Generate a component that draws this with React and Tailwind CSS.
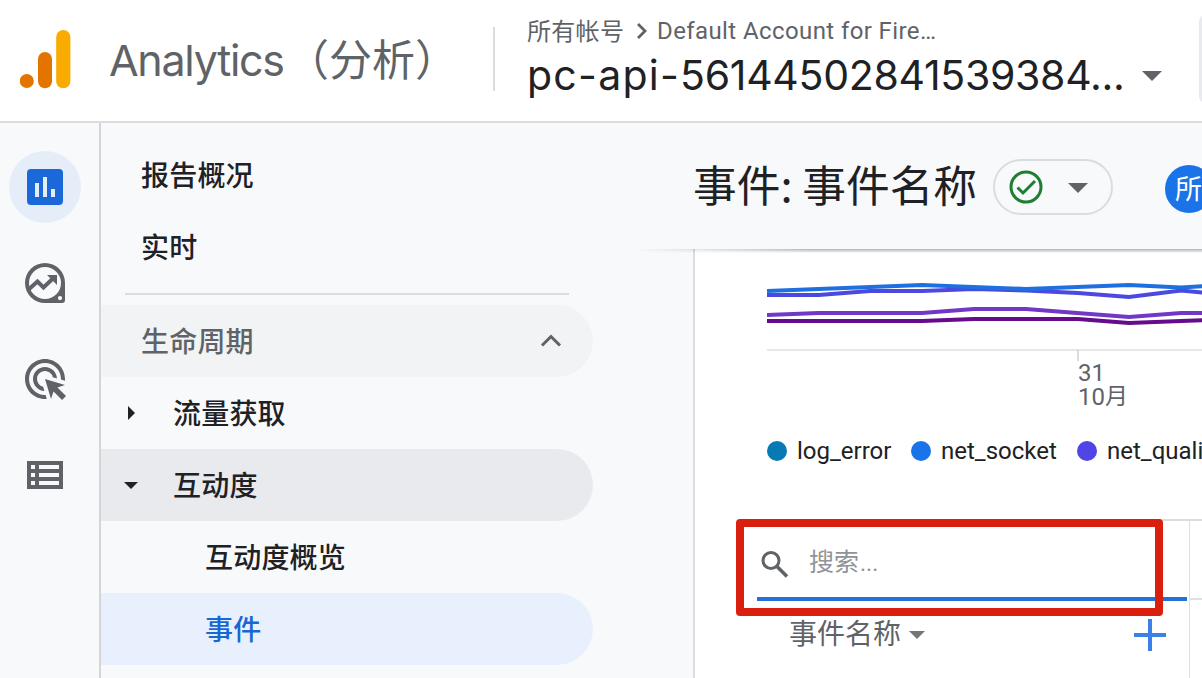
import React from 'react';

function Caret({ className }) {
  return (
    <svg viewBox="0 0 20 10" className={className} fill="currentColor">
      <path d="M0 0h20L10 10z" />
    </svg>
  );
}

function Header() {
  return (
    <header className="flex h-[123px] shrink-0 border-b-2 border-[#dadce0] bg-white">
      <div className="flex w-[495px] shrink-0 pl-5">
        <svg className="mt-[29px] h-[60px] w-[51px] shrink-0" viewBox="0 0 51 60">
          <circle cx="6.8" cy="52" r="7" fill="#e37400" />
          <rect x="18" y="23" width="14" height="36.2" rx="7" fill="#e37400" />
          <rect x="36.2" y="1" width="14.2" height="58.2" rx="7" fill="#f9ab00" />
        </svg>
        <div className="mt-[27px] ml-[38px] flex w-[384px] shrink-0 whitespace-nowrap leading-[60px] text-[#5f6368]">
          <span className="mt-[3px] w-[177px] shrink-0 font-['Inter',sans-serif] text-[43px] tracking-[-1.300px]">Analytics</span>
          <span className="font-['Noto_Sans_CJK_SC',sans-serif] text-[43px]">（分析）</span>
        </div>
        <div className="mt-[27px] h-16 w-[2px] shrink-0 bg-[#dadce0]" />
      </div>
      <div className="flex w-[704px] shrink-0 flex-col pl-8">
        <div className="mt-[15px] flex h-8 items-center whitespace-nowrap text-[24px] leading-8 text-[#5f6368]">
          <span className="-mt-[2px] w-[97px] font-['Noto_Sans_CJK_SC',sans-serif] tracking-[0.3px]">所有帐号</span>
          <svg className="mr-[7px] ml-2 h-6 w-[18px]" viewBox="0 0 18 24" fill="none" stroke="currentColor" strokeWidth="2.8">
            <path d="M6 5l7 7-7 7" />
          </svg>
          <span className="font-['Roboto',sans-serif] tracking-[0.4px]">Default Account for Fire…</span>
        </div>
        <div className="flex h-[56px] items-center">
          <span className="-mt-px w-[615px] whitespace-nowrap font-['Inter',sans-serif] text-[41px] leading-[56px] tracking-[-0.300px] text-[#202124]">
            <span className="tracking-[1.250px]">pc-api-</span>56144502841539384...
          </span>
          <Caret className="mt-[2px] h-[10px] w-5 text-[#5f6368]" />
        </div>
      </div>
      <div className="mt-[14px] h-[90px] w-10 shrink-0 rounded-lg bg-[#e8eaed]" />
    </header>
  );
}

function Rail() {
  return (
    <nav className="flex w-[101px] shrink-0 flex-col gap-6 border-r-2 border-[#d3d5d9] pt-7 pl-[9px] text-[#5f6368]">
      <div className="flex size-[72px] items-center justify-center rounded-full bg-[#e5edf9]">
        <svg className="size-12 text-[#1b69d8]" viewBox="0 0 24 24" fill="currentColor">
          <path d="M19 3H5a2 2 0 0 0-2 2v14a2 2 0 0 0 2 2h14a2 2 0 0 0 2-2V5a2 2 0 0 0-2-2zM9 17H7v-7h2zm4 0h-2V7h2zm4 0h-2v-4h2z" />
        </svg>
      </div>
      <div className="flex size-[72px] items-center justify-center">
        <svg className="size-12" viewBox="0 0 48 48">
          <path
            fill="currentColor"
            fillRule="evenodd"
            d="M24 4a20 20 0 1 0 0 40h17a3 3 0 0 0 3-3V24A20 20 0 0 0 24 4zm0 4a16 16 0 1 1 0 32 16 16 0 0 1 0-32zm15 29a2.1 2.1 0 1 1 0 4.200 2.100 2.100 0 0 1 0-4.200z"
          />
          <path d="M7 31l9.500-8.500 6 6L33 18.500" fill="none" stroke="currentColor" strokeWidth="4" />
          <path d="M26 16h10v10z" fill="currentColor" />
        </svg>
      </div>
      <div className="flex size-[72px] items-center justify-center">
        <svg className="size-12" viewBox="0 0 24 24" fill="currentColor">
          <path d="M11.710 17.990A5.993 5.993 0 0 1 6 12c0-3.310 2.690-6 6-6 3.220 0 5.840 2.530 5.990 5.710l-2.100-.63a3.999 3.999 0 1 0-4.810 4.810l.63 2.100zM22 12c0 .3-.01.6-.04.9l-1.970-.59c.01-.1.01-.21.01-.31 0-4.420-3.580-8-8-8s-8 3.580-8 8 3.580 8 8 8c.1 0 .21 0 .31-.01l.59 1.970c-.3.03-.6.04-.9.04-5.520 0-10-4.480-10-10S6.480 2 12 2s10 4.480 10 10zm-3.770 4.260L22 15l-10-3 3 10 1.260-3.770 4.270 4.270 1.980-1.980-4.280-4.260z" />
        </svg>
      </div>
      <div className="flex size-[72px] items-center justify-center">
        <svg className="size-12" viewBox="0 0 24 24" fill="currentColor">
          <path d="M3 5v14h18V5H3zm4 2v2H5V7h2zm-2 6v-2h2v2H5zm0 2h2v2H5v-2zm14 2H9v-2h10v2zm0-4H9v-2h10v2zm0-4H9V7h10v2z" />
        </svg>
      </div>
    </nav>
  );
}

function Sidebar() {
  return (
    <aside className="flex w-[592px] shrink-0 flex-col pt-4 font-['Noto_Sans_CJK_SC',sans-serif] text-[28px] leading-[70px] font-medium tracking-[0.2px] text-[#202124]">
      <div className="h-[72px] pl-10">报告概况</div>
      <div className="h-[72px] pl-10">实时</div>
      <div className="mt-[10px] mb-[10px] ml-6 h-[2px] w-[444px] bg-[#dadce0]" />
      <div className="flex h-[72px] w-[492px] items-center justify-between rounded-r-full bg-[#f1f3f4] pr-[30px] pl-10 text-[#5f6368]">
        <span className="-mt-[2px]">生命周期</span>
        <svg className="h-6 w-6" viewBox="0 0 24 24" fill="none" stroke="currentColor" strokeWidth="3">
          <path d="M3 16.500l9-9 9 9" />
        </svg>
      </div>
      <div className="flex h-[72px] w-[492px] items-center pl-[27px]">
        <svg className="h-[14px] w-[7px]" viewBox="0 0 7 14" fill="currentColor">
          <path d="M0 0l7 7-7 7z" />
        </svg>
        <span className="-mt-[2px] ml-[38px]">流量获取</span>
      </div>
      <div className="flex h-[72px] w-[492px] items-center rounded-r-full bg-[#e8eaed] pl-[23px]">
        <Caret className="h-[7px] w-[14px]" />
        <span className="-mt-[2px] ml-[35px]">互动度</span>
      </div>
      <div className="h-[72px] pl-[104px]">互动度概览</div>
      <div className="h-[72px] w-[492px] rounded-r-full bg-[#e8f0fe] pl-[104px] text-[#1967d2]">事件</div>
    </aside>
  );
}

function ReportHeader() {
  return (
    <div className="relative flex h-[126px] w-[509px] shrink-0 items-start">
      <h1 className="mt-[28px] w-[300px] shrink-0 whitespace-nowrap font-['Noto_Sans_CJK_SC',sans-serif] text-[43.700px] leading-[64px] text-[#202124]">
        事件: 事件名称
      </h1>
      <div className="mt-9 flex h-14 w-[120px] shrink-0 items-center rounded-full border-2 border-[#dadce0] pl-[14px]">
        <svg className="h-[34px] w-[34px]" viewBox="0 0 34 34" fill="none" stroke="#1e7e34">
          <circle cx="17" cy="17" r="15" strokeWidth="3" />
          <path d="M8.500 17.500l5.500 5.500L26 11" strokeWidth="3" />
        </svg>
        <Caret className="mt-[2px] ml-[25px] h-[10px] w-5 text-[#5f6368]" />
      </div>
      <div className="mt-[42px] ml-[52px] flex size-12 shrink-0 items-center justify-start rounded-full bg-[#1a73e8] pl-[10px] font-['Noto_Sans_CJK_SC',sans-serif] text-[27px] leading-[48px] text-white">
        <span className="-mt-[2px]">所</span>
      </div>
      <div className="absolute top-[126px] -left-[60px] h-1 w-[570px] bg-linear-to-b from-black/30 to-transparent [mask-image:linear-gradient(to_right,transparent,black_180px)]" />
    </div>
  );
}

const series = [
  { color: '#7038c4', points: '0,65 51.700,63 155,63 207,59 259,59 310,63 362,67 414,63 440,63' },
  { color: '#660b8c', points: '0,71 155,71 207,69 311,69 362,73 414,71 440,70' },
  { color: '#4b49e0', points: '0,45 52,45 103,41 155,41 207,39 259,40.500 311,43 362,47 414,40.500 440,43' },
  { color: '#1f70df', points: '0,41 155,35 259,39 362,35 414,37.500 440,36' },
];

function Chart() {
  return (
    <div className="mt-px ml-[72px] h-[180px] w-[435px] shrink-0 font-['Roboto','Noto_Sans_CJK_SC',sans-serif]">
      <svg className="h-[111px] w-[435px]" viewBox="0 0 435 111">
        <path d="M0 100H435" stroke="#e8e8e8" strokeWidth="2" />
        <path d="M311 99V111" stroke="#dadce0" strokeWidth="2" />
        {series.map((s) => (
          <polyline key={s.color} points={s.points} fill="none" stroke={s.color} strokeWidth="4" />
        ))}
      </svg>
      <div className="ml-[311px] text-[24px] leading-6 text-[#5f6368]">
        <div>31</div>
        <div className="flex">10<span className="h-6 text-[23px]">月</span></div>
      </div>
    </div>
  );
}

function Legend() {
  return (
    <div className="ml-[72px] flex h-[42px] w-[435px] shrink-0 items-center overflow-hidden whitespace-nowrap font-['Roboto',sans-serif] text-[24px] text-[#202124]">
      <div className="flex w-36 shrink-0 items-center gap-[10px]"><i className="size-5 rounded-full bg-[#0779b5]" />log_error</div>
      <div className="flex w-[166px] shrink-0 items-center gap-[10px]"><i className="size-5 rounded-full bg-[#1a73e8]" />net_socket</div>
      <div className="flex shrink-0 items-center gap-[10px]"><i className="size-5 rounded-full bg-[#4f46e5]" />net_quality</div>
    </div>
  );
}

function Table() {
  return (
    <div className="relative mt-[47px] ml-[62px] flex h-[159px] w-[445px] border-t-2 border-[#dadce0] font-['Noto_Sans_CJK_SC',sans-serif]">
      <div className="flex w-[430px] shrink-0 flex-col">
        <div className="flex h-20 shrink-0 items-center border-b-4 border-[#2571d6] pl-1">
          <svg className="mt-[10px] h-[28px] w-[28px]" viewBox="0 0 28 28" fill="none" stroke="#5f6368">
            <circle cx="10" cy="10.500" r="8" strokeWidth="3" />
            <path d="M15.500 16l10.500 10.500" strokeWidth="3.500" />
          </svg>
          <span className="mt-[6px] ml-[20px] text-[25px] text-[#909498]">搜索<span className="ml-px font-['Roboto',sans-serif] text-[23px]">...</span></span>
        </div>
        <div className="flex h-[68px] items-center pl-8 text-[28px] text-[#5f6368]">
          <span className="-mt-[7px] w-[120px]">事件名称</span>
          <Caret className="h-2 w-4 text-[#757575]" />
          <svg className="ml-[209px] size-8" viewBox="0 0 32 32" stroke="#3b80e8" strokeWidth="4">
            <path d="M16 0v32M0 16h32" />
          </svg>
        </div>
      </div>
      <div className="ml-[2px] w-[13px] border-l border-[#e0e0e0]">
        <div className="h-[79px] border-b-2 border-[#e0e0e0]" />
      </div>
      <div className="absolute -top-[2px] -left-[21px] h-[97px] w-[427px] rounded border-8 border-[#db1f0e]" />
    </div>
  );
}

export default function App() {
  return (
    <div className="flex h-[678px] w-[1202px] flex-col overflow-hidden bg-[#f8f9fb]">
      <Header />
      <div className="flex h-[555px]">
        <Rail />
        <Sidebar />
        <main className="flex w-[509px] shrink-0 flex-col">
          <ReportHeader />
          <div className="flex h-[429px] w-[509px] flex-col border-l-2 border-[#dadce0] bg-white">
            <Chart />
            <Legend />
            <Table />
          </div>
        </main>
      </div>
    </div>
  );
}
